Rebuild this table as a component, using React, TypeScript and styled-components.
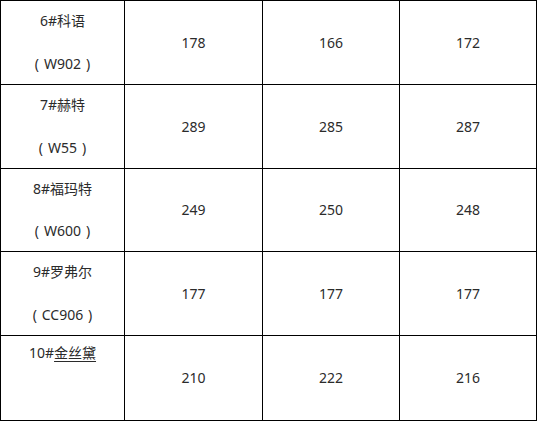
import React from "react";
import styled, { createGlobalStyle } from "styled-components";

const Global = createGlobalStyle`
  html, body { margin: 0; padding: 0; background: #fff; }
  body { font-family: "Noto Sans", "Noto Sans CJK SC", sans-serif; }
`;

const Grid = styled.div`
  display: grid;
  grid-template-columns: 123px 137px 136px 136px;
  grid-template-rows: 83px 83px 82px 83px 84px;
  gap: 1px;
  padding: 1px;
  width: 537px;
  box-sizing: border-box;
  background: #000;
`;

const Cell = styled.div`
  background: #fff;
  display: flex;
  align-items: center;
  justify-content: center;
  font-size: 14px;
  color: #2b2b2b;
  line-height: 20px;
`;

const NameCell = styled.div<{ $top?: number }>`
  background: #fff;
  display: flex;
  flex-direction: column;
  align-items: center;
  justify-content: space-between;
  padding: ${(p) => p.$top ?? 10}px 0 10px;
  box-sizing: border-box;
  font-size: 14px;
  color: #2b2b2b;
  line-height: 20px;
  font-family: "Noto Sans", "Noto Sans CJK SC", sans-serif;
`;

const Code = styled.span`
  display: flex;
  align-items: center;
`;

const Paren = styled.span`
  display: inline-block;
  width: 14px;
  text-align: center;
`;

const Under = styled.span`
  text-decoration: underline;
  text-underline-offset: 3px;
`;

const Faded = styled.span`
  color: transparent;
`;

type Row = { name: React.ReactNode; code: string; hide?: boolean; top?: number; vals: number[] };

const rows: Row[] = [
  { name: "6#科语", code: "W902", vals: [178, 166, 172] },
  { name: "7#赫特", code: "W55", vals: [289, 285, 287] },
  { name: "8#福玛特", code: "W600", vals: [249, 250, 248] },
  { name: "9#罗弗尔", code: "CC906", vals: [177, 177, 177] },
  {
    name: (
      <span>
        10#<Under>金丝黛</Under>
      </span>
    ),
    code: "W000",
    hide: true,
    top: 7,
    vals: [210, 222, 216],
  },
];

export default function App() {
  return (
    <>
      <Global />
      <Grid>
        {rows.map((r, i) => (
          <React.Fragment key={i}>
            <NameCell $top={r.top}>
              <span>{r.name}</span>
              {r.hide ? (
                <Faded>（{r.code}）</Faded>
              ) : (
                <Code>
                  <Paren>(</Paren>
                  {r.code}
                  <Paren>)</Paren>
                </Code>
              )}
            </NameCell>
            {r.vals.map((v, j) => (
              <Cell key={j}>{v}</Cell>
            ))}
          </React.Fragment>
        ))}
      </Grid>
    </>
  );
}
